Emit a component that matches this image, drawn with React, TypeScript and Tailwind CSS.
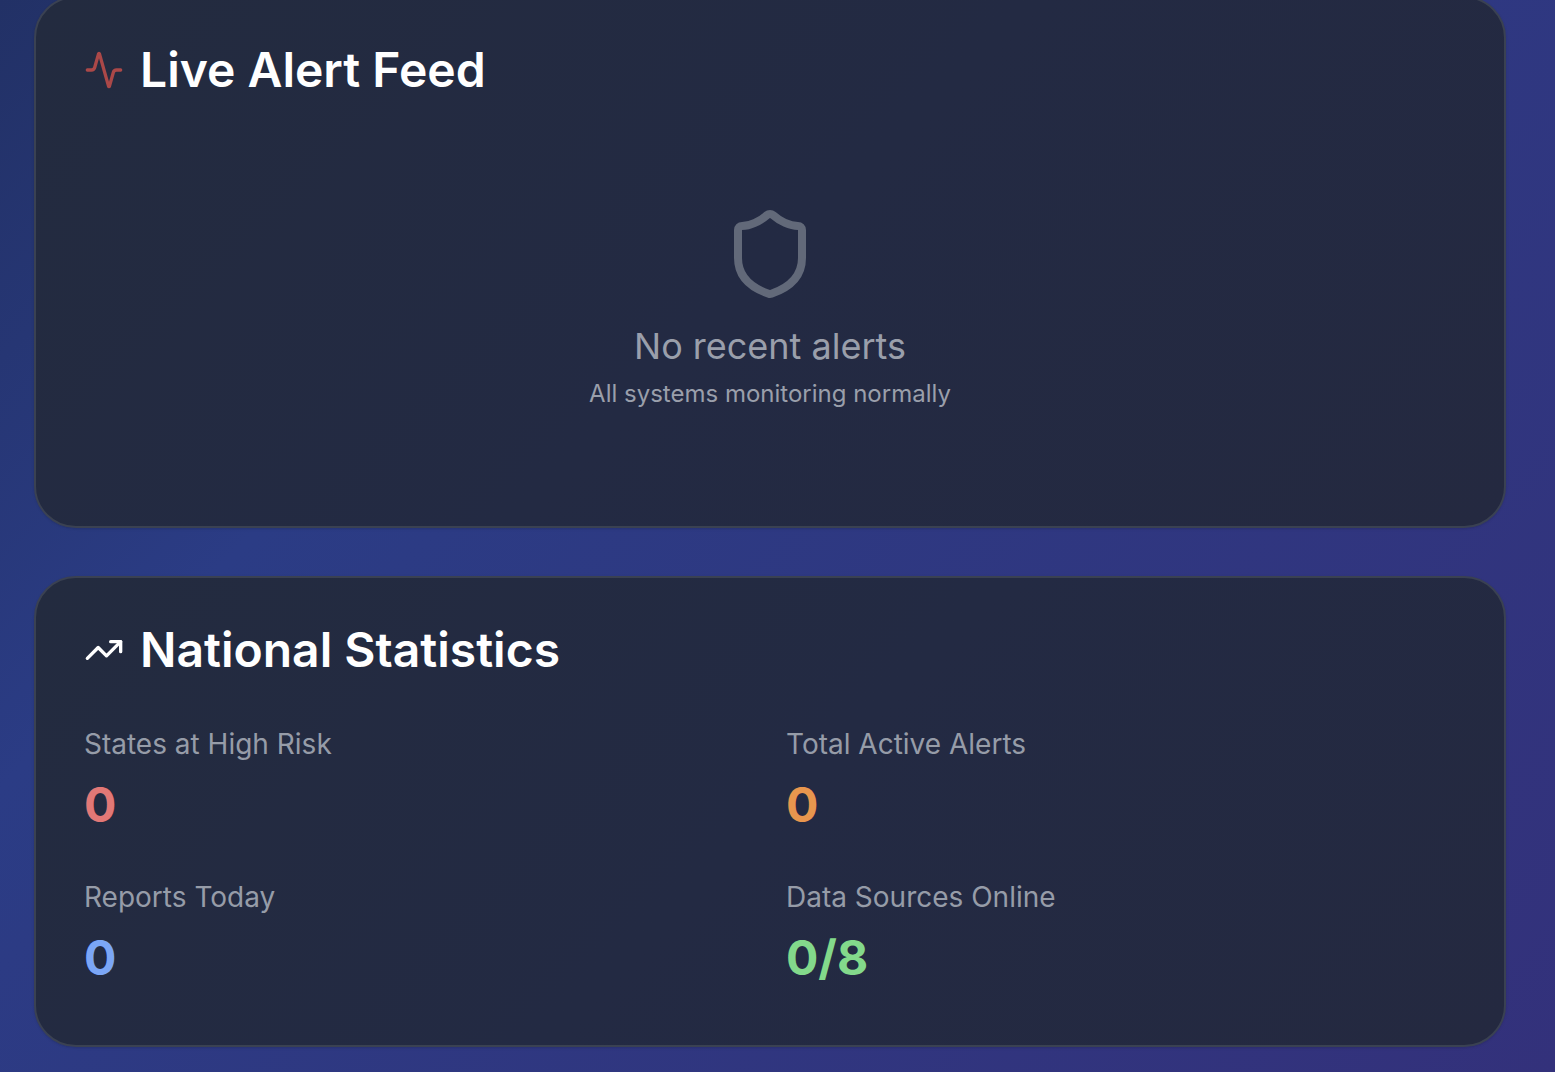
import type { ReactNode } from "react";
import { Activity, Shield, TrendingUp } from "lucide-react";

type Stat = { label: string; value: string; color: string };

const stats: Stat[] = [
  { label: "States at High Risk", value: "0", color: "text-[#e27876]" },
  { label: "Total Active Alerts", value: "0", color: "text-[#e8964e]" },
  { label: "Reports Today", value: "0", color: "text-[#7ba6f6]" },
  { label: "Data Sources Online", value: "0/8", color: "text-[#83d98b]" },
];

function Card({ icon, title, children }: { icon: ReactNode; title: string; children: ReactNode }) {
  return (
    <section className="rounded-[42px] border-2 border-[#3a4152] bg-linear-135 from-[#232b3f] via-[#232a43] to-[#242940] px-12 pt-12 shadow-sm">
      <h2 className="flex items-center gap-4 text-5xl leading-none font-semibold text-white">
        {icon}
        {title}
      </h2>
      {children}
    </section>
  );
}

export default function App() {
  return (
    <main className="min-h-screen overflow-hidden bg-linear-135 from-[#223166] via-[#2b3c85] via-30% to-[#33317b] pr-[49px] pb-6 pl-[34px] font-[Inter,sans-serif]">
      <div className="-mt-1 flex flex-col gap-12">
        <Card icon={<Activity className="size-10 shrink-0 text-[#ab4848]" />} title="Live Alert Feed">
          <div className="flex flex-col items-center pt-28 pb-[116px] text-center text-[#9a9fab]">
            <Shield className="mb-4 size-24 text-[#626979]" />
            <p className="text-4xl leading-[56px]">No recent alerts</p>
            <p className="mt-1 text-2xl leading-8">All systems monitoring normally</p>
          </div>
        </Card>
        <Card icon={<TrendingUp className="size-10 shrink-0" />} title="National Statistics">
          <dl className="grid grid-cols-2 gap-x-8 gap-y-10 pt-[50px] pb-[55px]">
            {stats.map((s) => (
              <div key={s.label}>
                <dt className="text-[28px] leading-[41px] text-[#969ca8]">{s.label}</dt>
                <dd className={`mt-2 text-5xl leading-[64px] font-bold ${s.color}`}>{s.value}</dd>
              </div>
            ))}
          </dl>
        </Card>
      </div>
    </main>
  );
}
